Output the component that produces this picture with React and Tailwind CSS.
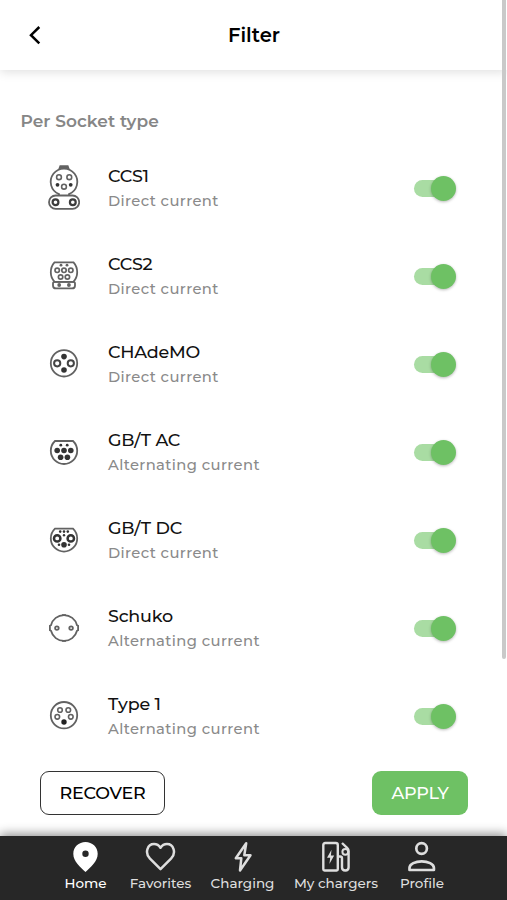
import { useState } from 'react';

function SocketIcon({ type }) {
  return (
    <svg
      className="w-8 h-12 text-[#626262]"
      viewBox="0 0 32 48"
      fill="none"
      stroke="currentColor"
      strokeWidth="1.8"
    >
      {type === 'ccs1' && (
        <>
          <path d="M11 5.8L12.3 2.2h7.4l1.3 3.6M12 3.8h8" />
          <path d="M11 31.5v-1.3a13.3 13.3 0 1 1 10 0v1.3" />
          <rect x="1" y="31.5" width="30.2" height="13.4" rx="6.7" />
          <g strokeWidth="1.6">
            <circle cx="11" cy="13.2" r="2.4" />
            <circle cx="21.3" cy="13.2" r="2.4" />
            <circle cx="16" cy="22.7" r="2.4" />
          </g>
          <g stroke="#3c3c3c" strokeWidth="2.2">
            <circle cx="7.5" cy="38.2" r="2.9" />
            <circle cx="24.8" cy="38.2" r="2.9" />
          </g>
          <g fill="#333" stroke="none">
            <circle cx="9.5" cy="20.8" r="1.9" />
            <circle cx="22.7" cy="20.8" r="1.9" />
          </g>
        </>
      )}
      {type === 'ccs2' && (
        <>
          <path d="M6.5 10.3h19q3.7 4 3.7 10 0 5.5-3.8 9.5H6.6Q2.8 26 2.8 20.3q0-6 3.7-10z" />
          <path d="M6.5 29.8h19q1.500 0 1.500 1.700v1.900q0 3-3 3H8q-3 0-3-3v-1.900q0-1.700 1.500-1.700z" />
          <g strokeWidth="1.7">
            <circle cx="9.2" cy="18.3" r="2.2" />
            <circle cx="16" cy="18.3" r="2.2" />
            <circle cx="22.8" cy="18.3" r="2.2" />
            <circle cx="12.6" cy="25" r="2.2" />
            <circle cx="19.4" cy="25" r="2.2" />
          </g>
          <g fill="currentColor" stroke="none">
            <circle cx="13" cy="13.2" r="1.4" />
            <circle cx="19" cy="13.2" r="1.4" />
            <circle cx="11.2" cy="33" r="1.9" />
            <circle cx="20.9" cy="33" r="1.9" />
          </g>
        </>
      )}
      {type === 'chademo' && (
        <>
          <circle cx="16" cy="23.3" r="13.2" />
          <circle cx="9.2" cy="23.3" r="3.1" stroke="#444" strokeWidth="2" />
          <circle cx="22.8" cy="23.3" r="3.1" stroke="#444" strokeWidth="2" />
          <g fill="#333" stroke="none">
            <circle cx="16" cy="16.6" r="2.8" />
            <circle cx="16" cy="30" r="2.8" />
          </g>
        </>
      )}
      {type === 'gbtac' && (
        <>
          <path d="M7 13h18q4.2 4 4.2 9.8A13.2 13.2 0 0 1 2.8 22.8Q2.8 17 7 13z" />
          <g fill="#333" stroke="none">
            <circle cx="9.2" cy="22.5" r="2.8" />
            <circle cx="16" cy="22.5" r="2.8" />
            <circle cx="22.8" cy="22.5" r="2.8" />
            <circle cx="12.6" cy="29.3" r="2.8" />
            <circle cx="19.4" cy="29.3" r="2.8" />
            <circle cx="12.8" cy="17.2" r="1.4" />
            <circle cx="19.2" cy="17.2" r="1.4" />
          </g>
        </>
      )}
      {type === 'gbtdc' && (
        <>
          <path d="M7 12.6h18q4.2 4 4.2 9.8A13.2 13.2 0 0 1 2.8 22.4Q2.8 16.6 7 12.6z" />
          <g stroke="#333" strokeWidth="2.5">
            <circle cx="9.2" cy="22.4" r="3.2" />
            <circle cx="22.8" cy="22.4" r="3.2" />
          </g>
          <g fill="#333" stroke="none">
            <circle cx="16" cy="28.8" r="2.8" />
            <circle cx="12.2" cy="15.6" r="1.3" />
            <circle cx="16" cy="15.6" r="1.3" />
            <circle cx="19.8" cy="15.6" r="1.3" />
            <circle cx="16" cy="19.2" r="1.2" />
            <circle cx="11" cy="28.8" r="1.3" />
            <circle cx="21" cy="28.8" r="1.3" />
          </g>
        </>
      )}
      {type === 'schuko' && (
        <>
          <path d="M3 21.2A13.4 13.4 0 0 1 29 21.2l1.1.6v4.400l-1.100.6A13.400 13.400 0 0 1 3 26.800l-1.100-.6v-4.400z" />
          <path d="M14 11.200h4M14 36.800h4" />
          <circle cx="8.9" cy="24.1" r="1.8" />
          <circle cx="23.1" cy="24.1" r="1.8" />
        </>
      )}
      {type === 'type1' && (
        <>
          <circle cx="16" cy="23.2" r="13.2" />
          <g strokeWidth="1.6">
            <circle cx="12" cy="18" r="2.3" />
            <circle cx="20.3" cy="18" r="2.3" />
            <circle cx="9.3" cy="24.8" r="2.3" />
            <circle cx="22.8" cy="24.8" r="2.3" />
          </g>
          <circle cx="16" cy="30" r="2.7" fill="#222" stroke="none" />
        </>
      )}
    </svg>
  );
}

const sockets = [
  { type: 'ccs1', name: 'CCS1', current: 'Direct current' },
  { type: 'ccs2', name: 'CCS2', current: 'Direct current' },
  { type: 'chademo', name: 'CHAdeMO', current: 'Direct current' },
  { type: 'gbtac', name: 'GB/T AC', current: 'Alternating current' },
  { type: 'gbtdc', name: 'GB/T DC', current: 'Direct current' },
  { type: 'schuko', name: 'Schuko', current: 'Alternating current' },
  { type: 'type1', name: 'Type 1', current: 'Alternating current' },
];

function Toggle({ label }) {
  const [checked, setChecked] = useState(true);

  return (
    <button
      type="button"
      role="switch"
      aria-checked={checked}
      aria-label={label}
      className="flex items-center w-[42px] h-[26px] cursor-pointer"
      onClick={() => setChecked((prev) => !prev)}
    >
      <span
        className={`w-[36px] h-[17px] rounded-full shrink-0 ${
          checked ? 'bg-[#a9dca3] -mr-[19px]' : 'bg-gray-300 -mr-[36px]'
        }`}
      />
      <span
        className={`relative w-[25px] h-[25px] rounded-full shrink-0 shadow-[0_1px_3px_rgba(0,0,0,0.28)] ${
          checked ? 'bg-[#6ec164]' : 'bg-white'
        }`}
      />
    </button>
  );
}

function NavItem({ label, className, active, children }) {
  return (
    <button
      type="button"
      className={`flex flex-col items-center shrink-0 text-[13.5px] leading-[18px] font-medium ${
        active ? 'text-white' : 'text-[#dedede]'
      } ${className}`}
    >
      <svg
        className="w-8 h-8 mb-px"
        viewBox="0 0 32 32"
        fill="none"
        stroke="currentColor"
        strokeWidth="2.5"
        strokeLinejoin="round"
      >
        {children}
      </svg>
      <span className="whitespace-nowrap">{label}</span>
    </button>
  );
}

export default function App() {
  return (
    <div className="relative w-[507px] h-[900px] flex flex-col overflow-hidden bg-white font-['Montserrat','Inter',sans-serif] text-black">
      <header className="h-[70px] shrink-0 flex items-center px-5 shadow-[0_2px_10px_rgba(0,0,0,0.13)]">
        <button type="button" aria-label="Back" className="w-7 h-7">
          <svg className="w-7 h-7" viewBox="0 0 28 28" fill="none" stroke="currentColor" strokeWidth="2.5">
            <path d="M19.3 6L11 14.2l8.3 8.2" />
          </svg>
        </button>
        <h1 className="grow text-center pt-px pr-[27px] text-[19.5px] font-semibold">Filter</h1>
      </header>

      <main className="grow min-h-0 overflow-hidden">
        <h2 className="h-[74px] pt-[39px] pl-[20.5px] text-[17px] leading-6 font-semibold text-[#868686] tracking-[0.05px]">
          Per Socket type
        </h2>
        <ul>
          {sockets.map(({ type, name, current }) => (
            <li key={type} className="h-[88px] flex items-center pl-12 pr-[51px]">
              <SocketIcon type={type} />
              <div className="grow pl-[28px] pt-[2px]">
                <p className="text-[17.5px] leading-6 font-medium text-[#111] tracking-[-0.2px]">{name}</p>
                <p className="text-[14.75px] leading-[26px] font-medium text-[#8a8a8a] tracking-[0.4px]">
                  {current}
                </p>
              </div>
              <Toggle label={name} />
            </li>
          ))}
        </ul>
      </main>

      <div className="h-[76px] shrink-0 flex items-start justify-between pt-[10.5px] pl-10 pr-[39px] text-[17.5px]">
        <button
          type="button"
          className="w-[125px] h-11 pt-px rounded-[9px] border border-[#333] font-medium tracking-[-0.2px]"
        >
          RECOVER
        </button>
        <button
          type="button"
          className="w-24 h-11 pt-px rounded-[9px] bg-[#6ec164] font-medium text-white tracking-[-0.2px]"
        >
          APPLY
        </button>
      </div>

      <nav className="h-16 shrink-0 flex pt-[5px] pl-[45px] bg-[#272727] shadow-[0_-2px_10px_rgba(0,0,0,0.45)]">
        <NavItem label="Home" className="w-[81px]" active>
          <path
            d="M15.5 1C8.8 1 3.3 6 3.3 12.7c0 8 7.3 13.3 12.2 18.3 4.9-5 12.2-10.3 12.2-18.3C27.7 6 22.2 1 15.5 1zm0 8.6a3.2 3.2 0 1 1 0 6.4 3.2 3.2 0 0 1 0-6.4z"
            fill="currentColor"
            fillRule="evenodd"
            stroke="none"
          />
        </NavItem>
        <NavItem label="Favorites" className="w-[69px]">
          <path d="M15.5 28.2L5 17.7C-.8 11.5 2.7 3 9 3c3.3 0 5.2 1.7 6.5 3.8C16.8 4.7 18.7 3 22 3c6.3 0 9.8 8.500 4 14.700z" />
        </NavItem>
        <NavItem label="Charging" className="w-[95px]">
          <path d="M19.2 2.2L8.8 17.3h5.500L13 29.500l10.500-15.200h-6.200z" />
        </NavItem>
        <NavItem label="My chargers" className="w-[92px]">
          <path
            d="M3.3 28.3V4q0-2 2-2h10.5q2 0 2 2v24.300q0 1.200-1.200 1.200h-12q-1.300 0-1.300-1.200zM17.800 15.500h2.400q1.800 0 1.800 1.800v9q0 3.200 3.300 3.200t3.300-3.200V10q0-1.700-1.200-2.800L22 2"
            strokeWidth="2.4"
          />
          <circle cx="25.3" cy="10.8" r="2.9" strokeWidth="2" />
          <path d="M11.500 8.700L7 16.800h3.200L9.400 23l4.800-8.500h-3.300z" fill="currentColor" stroke="none" />
        </NavItem>
        <NavItem label="Profile" className="w-[80px]">
          <circle cx="15.6" cy="7.5" r="5.3" strokeWidth="2.7" />
          <path d="M3.500 29v-2.200c0-3.700 6-6.500 12.200-6.500s12.200 2.800 12.200 6.500V29z" strokeWidth="2.7" />
        </NavItem>
      </nav>

      <div className="absolute top-0 right-[1px] w-1 h-[659px] rounded-b-full bg-[#c9c9c9]" />
    </div>
  );
}
